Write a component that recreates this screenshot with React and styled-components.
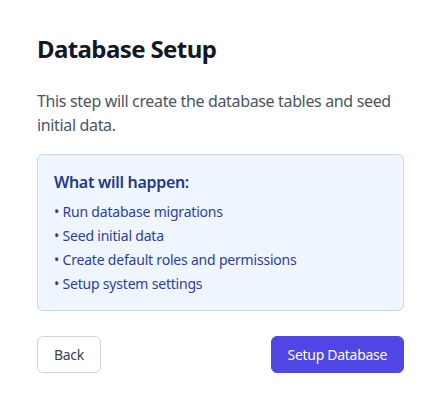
import React from 'react';
import styled, { createGlobalStyle } from 'styled-components';

const GlobalStyle = createGlobalStyle`
  * { box-sizing: border-box; }
  body {
    margin: 0;
    background: #ffffff;
    font-family: "Noto Sans", "Open Sans", sans-serif;
  }
`;

const steps = [
  'Run database migrations',
  'Seed initial data',
  'Create default roles and permissions',
  'Setup system settings',
];

function App() {
  return (
    <>
      <GlobalStyle />
      <Card>
        <Title>Database Setup</Title>
        <Intro>This step will create the database tables and seed initial data.</Intro>
        <InfoBox>
          <InfoTitle>What will happen:</InfoTitle>
          <StepList>
            {steps.map(step => <StepItem key={step}>• {step}</StepItem>)}
          </StepList>
        </InfoBox>
        <Actions>
          <Button>Back</Button>
          <Button primary>Setup Database</Button>
        </Actions>
      </Card>
    </>
  );
}

const Card = styled.div`
  width: 447px;
  min-height: 404px;
  padding: 33px 43px 0 37px;
  background: #ffffff;
`;

const Title = styled.h2`
  margin: 0 0 24px;
  font-size: 24px;
  line-height: 32px;
  font-weight: 700;
  letter-spacing: -0.6px;
  color: #111827;
`;

const Intro = styled.p`
  margin: 0 0 17px;
  font-size: 16px;
  line-height: 24px;
  letter-spacing: -0.35px;
  color: #4b5563;
`;

const InfoBox = styled.div`
  padding: 15px 16px 16px;
  background: #eff6ff;
  border: 1px solid #bfdbfe;
  border-radius: 6px;
`;

const InfoTitle = styled.h3`
  margin: 0 0 8px;
  font-size: 16px;
  line-height: 24px;
  font-weight: 600;
  letter-spacing: -0.3px;
  color: #1e3a8a;
`;

const StepList = styled.ul`
  margin: 0;
  padding: 0;
  list-style: none;
  display: flex;
  flex-direction: column;
  gap: 4px;
`;

const StepItem = styled.li`
  font-size: 14px;
  line-height: 20px;
  letter-spacing: -0.2px;
  color: #2b3f9e;
`;

const Actions = styled.div`
  margin-top: 25px;
  display: flex;
  justify-content: space-between;
`;

const Button = styled.button`
  height: 37px;
  padding: 0 16px;
  font-family: inherit;
  font-size: 14px;
  font-weight: 400;
  letter-spacing: -0.3px;
  border-radius: 6px;
  cursor: pointer;
  border: 1px solid ${p => (p.primary ? '#4f46e5' : '#d1d5db')};
  background: ${p => (p.primary ? '#4f46e5' : '#ffffff')};
  color: ${p => (p.primary ? '#ffffff' : '#374151')};
`;

export default App;
